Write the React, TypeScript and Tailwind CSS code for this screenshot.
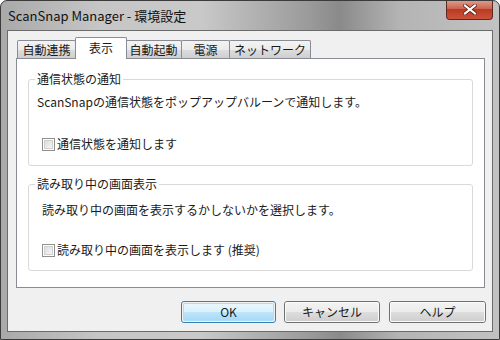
import React from "react";

function Checkbox({ label }: { label: string }) {
  return (
    <div className="flex items-center h-[16px]">
      <div className="w-[13px] h-[13px] border border-[#8e8f8f] bg-white p-px">
        <div className="w-full h-full border border-[#d0d0d0] bg-[linear-gradient(135deg,#dcdcdc,#f6f6f6)]" />
      </div>
      <span className="ml-[2px] leading-[16px]">{label}</span>
    </div>
  );
}

function Tab({ label, w, selected }: { label: string; w: number; selected?: boolean }) {
  if (selected) {
    return (
      <div
        className="h-[22px] border border-b-0 border-[#898c95] bg-white rounded-t-[2px] flex justify-center pt-[2px] leading-[16px] -mx-px z-10"
        style={{ width: w }}
      >
        {label}
      </div>
    );
  }
  return (
    <div
      className="h-[18px] mb-px border border-b-0 border-[#898c95] bg-[linear-gradient(#f3f3f3,#ebebeb_50%,#dddddd_51%,#cfcfcf)] rounded-t-[2px] flex justify-center items-center leading-[16px] -ml-px first:ml-0"
      style={{ width: w }}
    >
      {label}
    </div>
  );
}

function Btn({ label, primary, w }: { label: string; primary?: boolean; w: number }) {
  return primary ? (
    <div className="h-[22px] rounded-[3px] border border-[#3c7fb1] p-px" style={{ width: w }}>
      <div className="w-full h-full rounded-[2px] border border-[#a8e0fb] bg-[linear-gradient(#eaf6fd,#d9f0fc_50%,#bee6fd_51%,#a7d9f5)] flex items-center justify-center leading-[16px]">
        {label}
      </div>
    </div>
  ) : (
    <div className="h-[22px] rounded-[3px] border border-[#707070]" style={{ width: w }}>
      <div className="w-full h-full rounded-[2px] border border-[#fbfbfb] bg-[linear-gradient(#f2f2f2,#ebebeb_50%,#dddddd_51%,#cfcfcf)] flex items-center justify-center leading-[16px]">
        {label}
      </div>
    </div>
  );
}

export default function App() {
  return (
    <div className="w-[500px] h-[340px] flex flex-col rounded-t-[7px] border border-[#3b3b3b] bg-[linear-gradient(90deg,#a9a9a9_0%,#c6c6c6_20%,#c9c9c9_40%,#9a9a9a_62%,#8a8a8a_68%,#b4b4b4_80%,#c2c2c2_100%)] text-[12px] text-[#1a1a1a] font-['Noto_Sans_CJK_JP','Noto_Sans',sans-serif] overflow-hidden">
      <div className="h-[29px] flex items-start justify-between shrink-0">
        <div className="pl-[7px] h-[29px] flex items-center leading-[16px] text-[13px] text-[#111]">
          ScanSnap Manager - 環境設定
        </div>
        <div className="-mt-px mr-[6px] w-[47px] h-[20px] rounded-b-[4px] border border-[#5c2a20] border-t-0 bg-[linear-gradient(#e0a090,#cc6550_45%,#bb3a22_50%,#cc523a)] flex items-center justify-center">
          <svg width="14" height="11" viewBox="0 0 14 11">
            <path d="M2 1.5 L12 9.5 M12 1.5 L2 9.5" stroke="#5a1a10" strokeWidth="3.6" strokeLinecap="square" />
            <path d="M2 1.5 L12 9.5 M12 1.5 L2 9.5" stroke="#ffffff" strokeWidth="2.2" strokeLinecap="square" />
          </svg>
        </div>
      </div>
      <div className="flex-1 mx-[6px] mb-[7px] border border-[#6b6b6b] bg-[#f0f0f0] flex flex-col">
        <div className="mt-[6px] ml-[9px] h-[22px] flex items-end -mb-px relative z-10">
          <Tab label="自動連携" w={59} />
          <Tab label="表示" w={52} selected />
          <Tab label="自動起動" w={57} />
          <Tab label="電源" w={49} />
          <Tab label="ネットワーク" w={82} />
        </div>
        <div className="ml-[8px] mr-[7px] h-[230px] border border-[#898c95] bg-white flex flex-col px-[11px]">
          <fieldset className="mt-[12px] border border-[#d9d9d9] rounded-[3px] pb-[13px]">
            <legend className="ml-[6px] px-[2px] leading-[16px]">通信状態の通知</legend>
            <div className="mt-[7px] pl-[8px] leading-[16px]">ScanSnapの通信状態をポップアップバルーンで通知します。</div>
            <div className="mt-[26px] pl-[13px]">
              <Checkbox label="通信状態を通知します" />
            </div>
          </fieldset>
          <fieldset className="mt-[10px] border border-[#d9d9d9] rounded-[3px] pb-[12px]">
            <legend className="ml-[6px] px-[2px] leading-[16px]">読み取り中の画面表示</legend>
            <div className="mt-[10px] pl-[13px] leading-[16px]">読み取り中の画面を表示するかしないかを選択します。</div>
            <div className="mt-[24px] pl-[13px]">
              <Checkbox label="読み取り中の画面を表示します (推奨)" />
            </div>
          </fieldset>
        </div>
        <div className="mt-[13px] flex justify-end pr-[6px]">
          <Btn label="OK" primary w={95} />
          <div className="w-[8px]" />
          <Btn label="キャンセル" w={96} />
          <div className="w-[9px]" />
          <Btn label="ヘルプ" w={97} />
        </div>
      </div>
    </div>
  );
}
